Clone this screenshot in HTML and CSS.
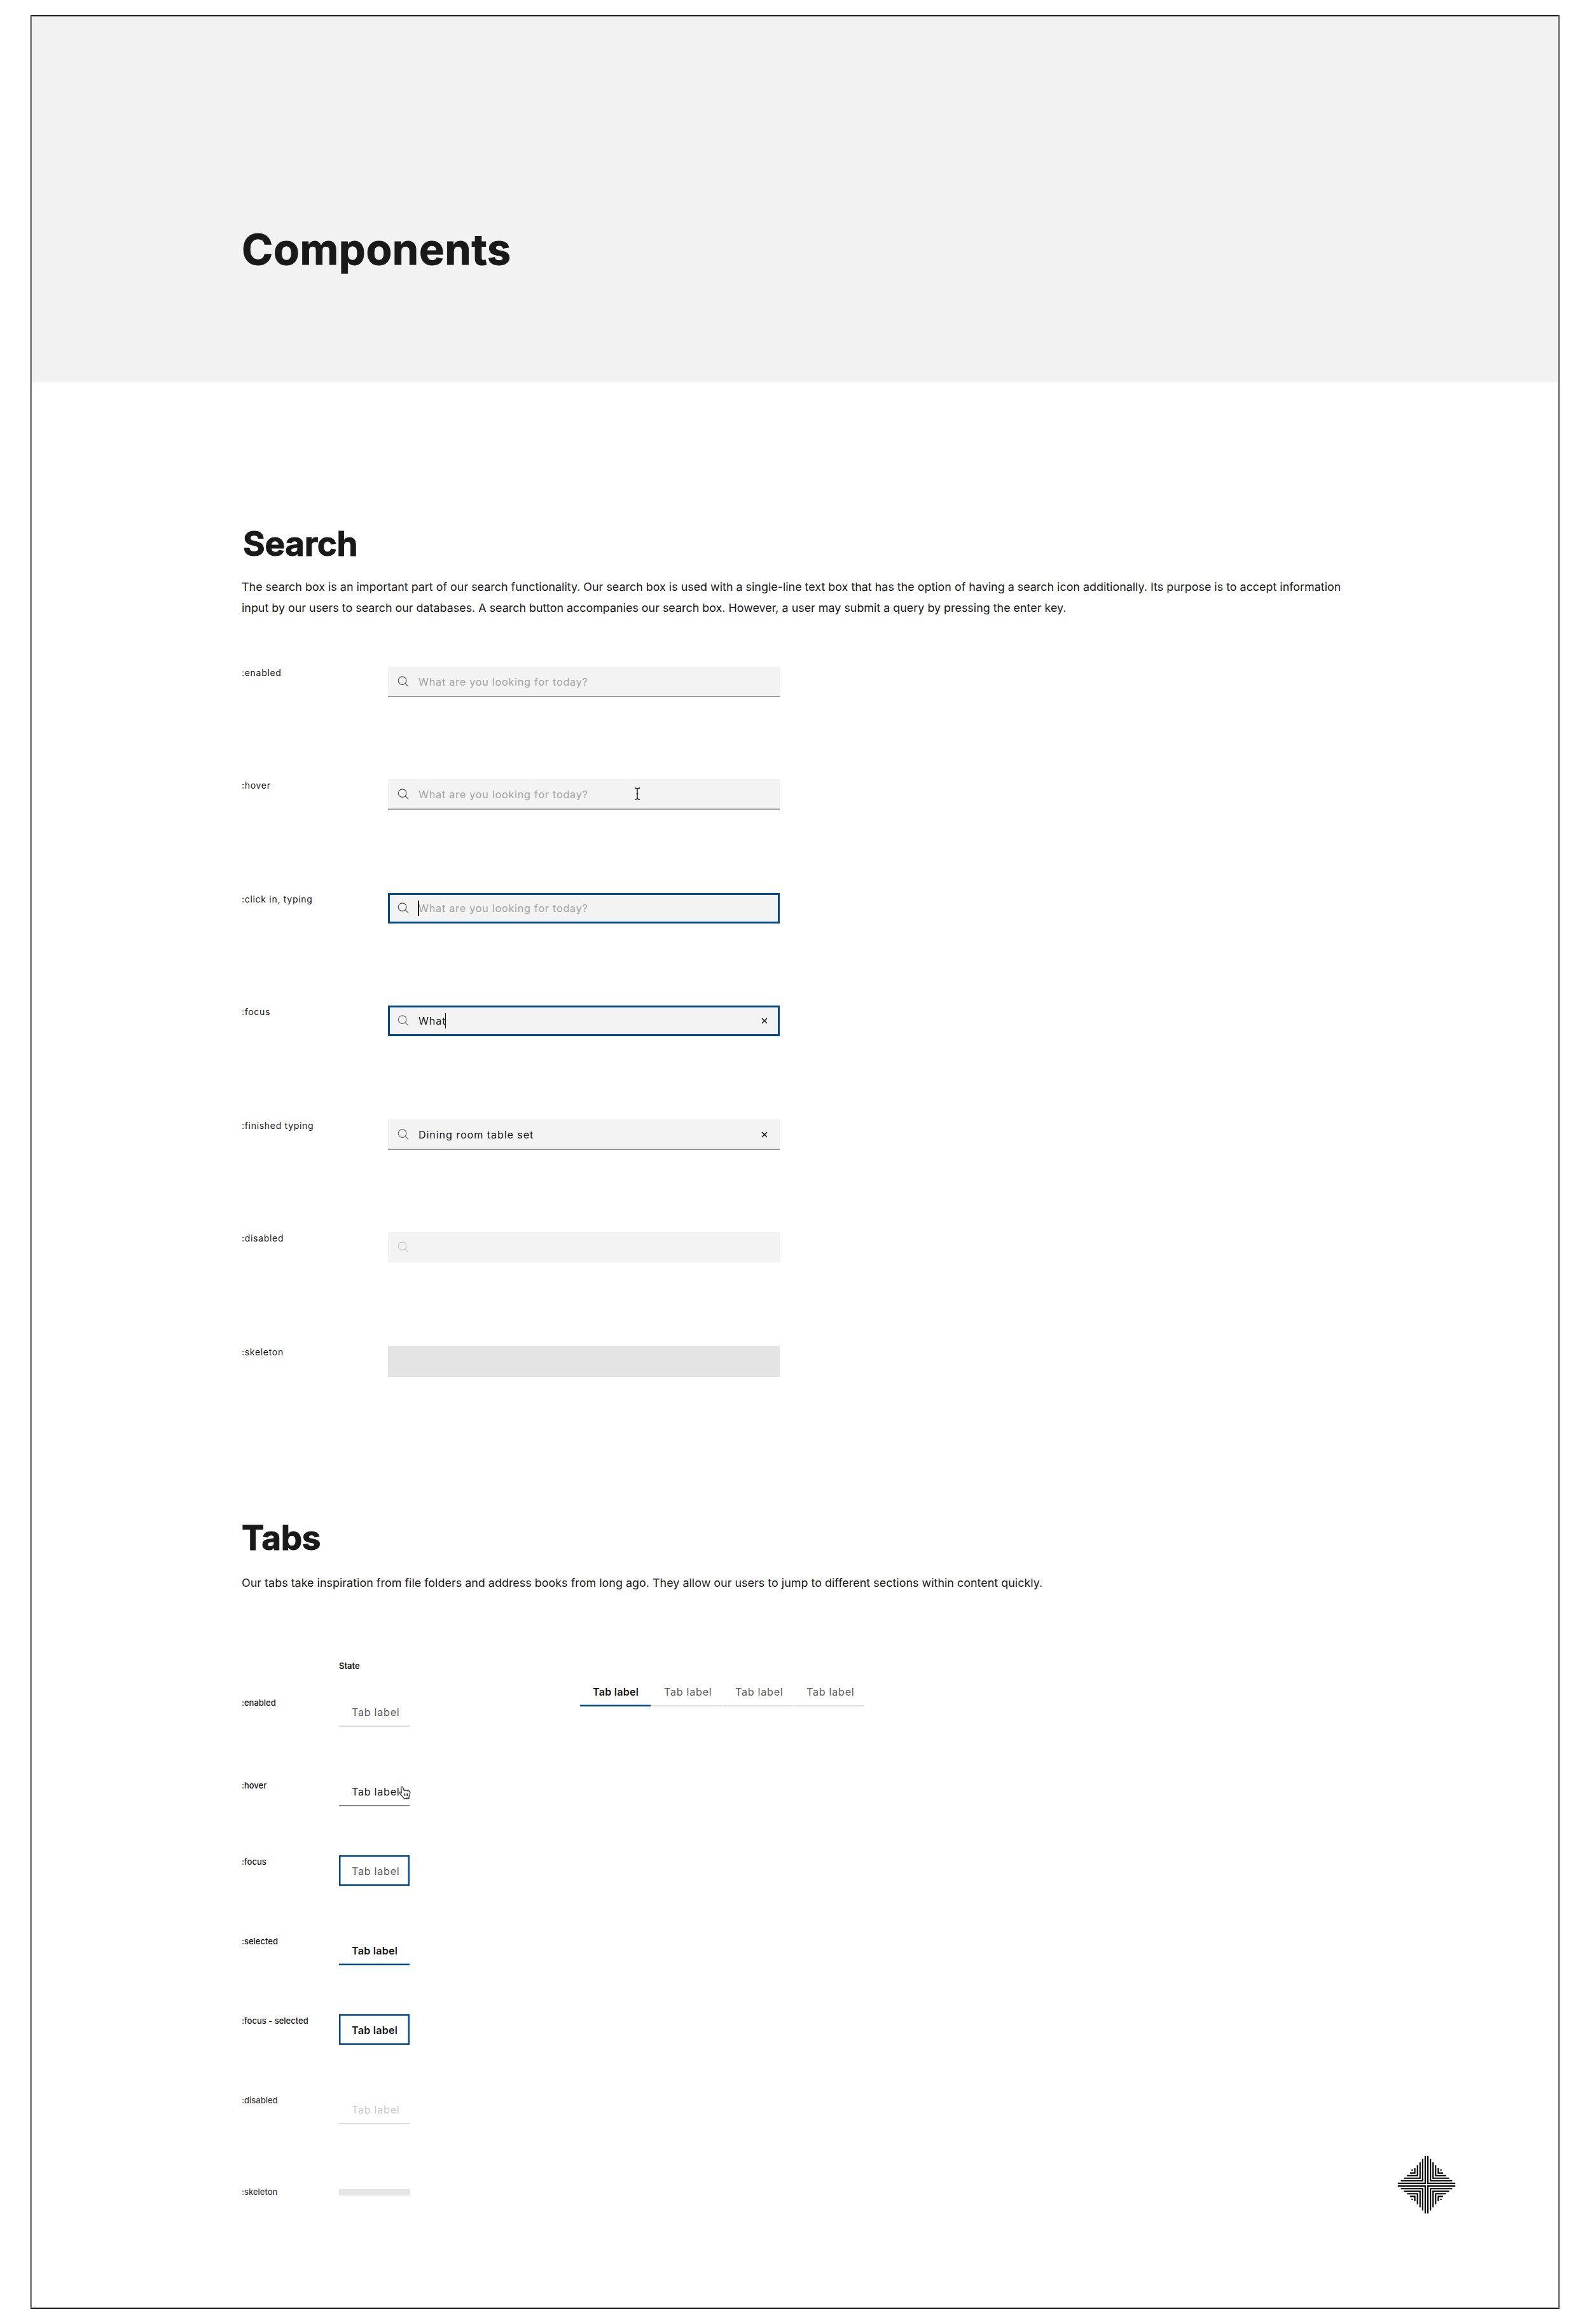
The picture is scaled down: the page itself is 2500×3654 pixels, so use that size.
FILE: index.html
```html
<!DOCTYPE html>
<html lang="en">

<head>
	<meta charset="UTF-8">
	<title>Components</title>
	<link rel="stylesheet" href="styles.css">
</head>

<body>

	<!-- shared icons -->
	<svg class="sprite" width="0" height="0">
		<symbol id="icon-search" viewBox="0 0 18 18">
			<circle cx="7.6" cy="7.1" r="6.3" />
			<path d="M12.1 11.6L17 16.4" />
		</symbol>
		<symbol id="icon-close" viewBox="0 0 10 10">
			<path d="M1 1L9 9M9 1L1 9" />
		</symbol>
	</svg>

	<div class="frame">
		<header class="hero">
			<h1>Components</h1>
		</header>

		<section class="search">
			<h2>Search</h2>
			<p>The search box is an important part of our search functionality. Our search box is used with a single-line text box that has the option of having a search icon additionally. Its purpose is to accept information<br>input by our users to search our databases. A search button accompanies our search box. However, a user may submit a query by pressing the enter key.</p>

			<div class="searchList">
				<div class="searchRow">
					<span class="state">:enabled</span>
					<div class="searchBox">
						<svg class="searchIcon"><use href="#icon-search" /></svg>
						<span class="placeholder">What are you looking for today?</span>
					</div>
				</div>
				<div class="searchRow">
					<span class="state">:hover</span>
					<div class="searchBox">
						<svg class="searchIcon"><use href="#icon-search" /></svg>
						<span class="placeholder">What are you looking for today?</span>
						<svg class="textCursor" viewBox="0 0 10 20">
							<path d="M1 1C3 1 5 1.5 5 4V16C5 18.5 3 19 1 19M9 1C7 1 5 1.5 5 4M9 19C7 19 5 18.5 5 16M3.6 10H6.4" />
						</svg>
					</div>
				</div>
				<div class="searchRow">
					<span class="state">:click in, typing</span>
					<div class="searchBox focused">
						<svg class="searchIcon"><use href="#icon-search" /></svg>
						<span class="placeholder caretStart">What are you looking for today?</span>
					</div>
				</div>
				<div class="searchRow">
					<span class="state">:focus</span>
					<div class="searchBox focused">
						<svg class="searchIcon light"><use href="#icon-search" /></svg>
						<span class="value caretEnd">What</span>
						<svg class="closeIcon"><use href="#icon-close" /></svg>
					</div>
				</div>
				<div class="searchRow">
					<span class="state">:finished typing</span>
					<div class="searchBox">
						<svg class="searchIcon light"><use href="#icon-search" /></svg>
						<span class="value">Dining room table set</span>
						<svg class="closeIcon"><use href="#icon-close" /></svg>
					</div>
				</div>
				<div class="searchRow">
					<span class="state">:disabled</span>
					<div class="searchBox disabled">
						<svg class="searchIcon"><use href="#icon-search" /></svg>
					</div>
				</div>
				<div class="searchRow">
					<span class="state">:skeleton</span>
					<div class="searchBox skeleton"></div>
				</div>
			</div>
		</section>

		<section class="tabs">
			<h2>Tabs</h2>
			<p>Our tabs take inspiration from file folders and address books from long ago. They allow our users to jump to different sections within content quickly.</p>

			<div class="tabsBoard">
				<div class="tabStates">
					<span class="tabHead">State</span>
					<div class="tabRow">
						<span class="tabState">:enabled</span>
						<div class="tab">Tab label</div>
					</div>
					<div class="tabRow hoverRow">
						<span class="tabState">:hover</span>
						<div class="tab hover">Tab label
							<svg class="handCursor" viewBox="0 0 19 21">
								<path d="M4.2 10.6L3.7 3.2C3.5 1.2 6 .7 6.6 2.6L8.3 7.4C8.8 6.2 10.6 6.1 11.2 7.3C12.2 6.5 13.5 6.7 14 7.9C15.6 7.3 17.5 8.2 17.8 9.8C18.1 12.4 17.6 14.2 16 16.6V19.6H13.8L12.8 18.8L11.8 19.8H8.3C7.2 17.6 4.8 16.3 3.2 13.6L1.2 11C.6 9.6 2.3 8.8 4.2 10.6Z" />
								<path d="M9 11.6V16M11.4 11.6V16M13.8 11.6V16" />
							</svg>
						</div>
					</div>
					<div class="tabRow">
						<span class="tabState">:focus</span>
						<div class="tab outlined">Tab label</div>
					</div>
					<div class="tabRow">
						<span class="tabState">:selected</span>
						<div class="tab selected">Tab label</div>
					</div>
					<div class="tabRow">
						<span class="tabState">:focus - selected</span>
						<div class="tab selected outlined">Tab label</div>
					</div>
					<div class="tabRow disabledRow">
						<span class="tabState">:disabled</span>
						<div class="tab disabled">Tab label</div>
					</div>
					<div class="tabRow skeletonRow">
						<span class="tabState">:skeleton</span>
						<div class="tabSkeleton"></div>
					</div>
				</div>

				<div class="tabGroup">
					<div class="tab selected">Tab label</div>
					<div class="tab">Tab label</div>
					<div class="tab">Tab label</div>
					<div class="tab">Tab label</div>
				</div>

				<svg class="logo" viewBox="-46 -46 92 92">
					<symbol id="quarter" viewBox="0 0 46 46">
						<path d="M2.1 45.2V2.1H45.2M6.2 40.4V6.2H40.4M10.2 35.6V10.2H35.6M14.3 30.8V14.3H30.8M18.4 26V18.4H26" />
						<path d="M21.5 23H23.7" />
					</symbol>
					<use href="#quarter" width="46" height="46" />
					<use href="#quarter" width="46" height="46" transform="scale(-1 1)" />
					<use href="#quarter" width="46" height="46" transform="scale(1 -1)" />
					<use href="#quarter" width="46" height="46" transform="scale(-1 -1)" />
				</svg>
			</div>
		</section>
	</div>

</body>

</html>
```
FILE: styles.css
```css
* {
	margin: 0;
	padding: 0;
	box-sizing: border-box;
}

body {
	font-family: Inter, "Liberation Sans", sans-serif;
	background-color: #fff;
	color: #161616;
	padding: 25px 49px;
}

svg {
	fill: none;
}

.sprite {
	position: absolute;
}

.frame {
	height: 3604px;
	border: 1px solid #777;
	outline: 1px solid #000;
	background-color: #fff;
}

.hero {
	height: 575px;
	padding: 326px 0 0 330px;
	background-color: #f2f2f2;
}

h1,
h2 {
	color: #191919;
	-webkit-text-stroke: 1px #191919;
}

h1 {
	font-size: 66.5px;
	line-height: 80px;
	letter-spacing: 0.7px;
}

h2 {
	font-size: 53px;
	line-height: 64px;
	letter-spacing: -0.3px;
}

p {
	font-size: 17.9px;
	line-height: 32.6px;
	white-space: nowrap;
}

/* search */

.search {
	height: 1785px;
	padding: 222px 0 0 330px;
}

.search h2 {
	padding-left: 2px;
}

.search p {
	margin-top: 20px;
}

.searchList {
	margin-top: 76px;
}

.searchRow {
	display: flex;
	align-items: flex-start;
	height: 177px;
}

.searchRow:nth-child(even) {
	height: 179px;
}

.state {
	width: 230px;
	font-size: 14px;
	line-height: 20px;
	letter-spacing: 0.7px;
}

.searchBox {
	position: relative;
	display: flex;
	align-items: center;
	width: 616px;
	height: 48px;
	padding: 0 19px 0 15px;
	background-color: #f3f3f3;
	box-shadow: inset 0 -1.5px #8d8d8d;
	font-size: 16.2px;
	letter-spacing: 0.76px;
}

.searchBox.focused {
	box-shadow: inset 0 0 0 3px #004b8d;
}

.searchBox.disabled,
.searchBox.skeleton {
	box-shadow: none;
}

.searchBox.skeleton {
	height: 49px;
	background-color: #e4e4e4;
}

.searchIcon {
	width: 18px;
	height: 18px;
	margin-right: 15px;
	stroke: #4c4c4c;
	stroke-width: 1.2;
}

.searchIcon.light {
	stroke: #666;
}

.disabled .searchIcon {
	stroke: #c6c6c6;
}

.placeholder,
.value {
	position: relative;
}

.placeholder {
	color: #a2a2a2;
}

.value {
	letter-spacing: 0.88px;
}

.caretStart::before,
.caretEnd::after {
	content: "";
	position: absolute;
	top: -2px;
	width: 1.5px;
	height: 24px;
	background-color: #161616;
}

.caretStart::before {
	left: -1px;
}

.caretEnd::after {
	right: 0;
}

.closeIcon {
	width: 10px;
	height: 10px;
	margin-left: auto;
	stroke: #161616;
	stroke-width: 1.5;
}

.textCursor {
	position: absolute;
	left: 387px;
	top: 13px;
	width: 10px;
	height: 20px;
	stroke: #161616;
	stroke-width: 1.4;
}

/* tabs */

.tabs {
	padding: 0 161px 0 330px;
}

.tabs p {
	margin-top: 23px;
	font-size: 17.95px;
}

.tabsBoard {
	display: flex;
	align-items: flex-start;
	height: 872px;
	margin-top: 103px;
}

.tabStates {
	width: 532px;
}

.tabHead {
	display: block;
	height: 58px;
	padding-left: 153px;
}

.tabHead,
.tabState {
	font-size: 13px;
	font-weight: 600;
	line-height: 20px;
}

.tabRow {
	display: flex;
	align-items: flex-start;
	height: 125px;
}

.tabState {
	width: 153px;
	font-weight: 500;
}

.hoverRow .tabState {
	padding-top: 5px;
}

.disabledRow .tabState,
.skeletonRow .tabState {
	color: #3d3d3d;
}

.tab {
	position: relative;
	width: 111px;
	height: 48px;
	padding: 1px 0 0 20px;
	box-shadow: inset 0 -2px #dedede;
	font-size: 16.2px;
	line-height: 48px;
	letter-spacing: 0.7px;
	white-space: nowrap;
	color: #5a5a5a;
}

.tab.hover {
	box-shadow: inset 0 -2px #8a8a8a;
	color: #161616;
}

.tab.selected {
	box-shadow: inset 0 -2.5px #004b8d;
	font-weight: 600;
	letter-spacing: 0.2px;
	color: #161616;
}

.tab.outlined {
	box-shadow: inset 0 0 0 2.5px #004b8d;
}

.tab.disabled {
	color: #c8c8c8;
}

.handCursor {
	position: absolute;
	left: 94px;
	top: 16px;
	width: 19px;
	height: 21px;
	fill: #fff;
	stroke: #161616;
	stroke-width: 1.2;
}

.disabledRow {
	height: 144px;
}

.skeletonRow {
	height: 44px;
}

.tabSkeleton {
	width: 112px;
	height: 10px;
	margin-top: 6px;
	background-color: #e4e4e4;
}

.tabGroup {
	display: flex;
	gap: 1px;
	margin-top: 26px;
}

.logo {
	align-self: flex-end;
	width: 92px;
	height: 92px;
	margin-left: auto;
	stroke: #000;
	stroke-width: 2.1;
}
```
